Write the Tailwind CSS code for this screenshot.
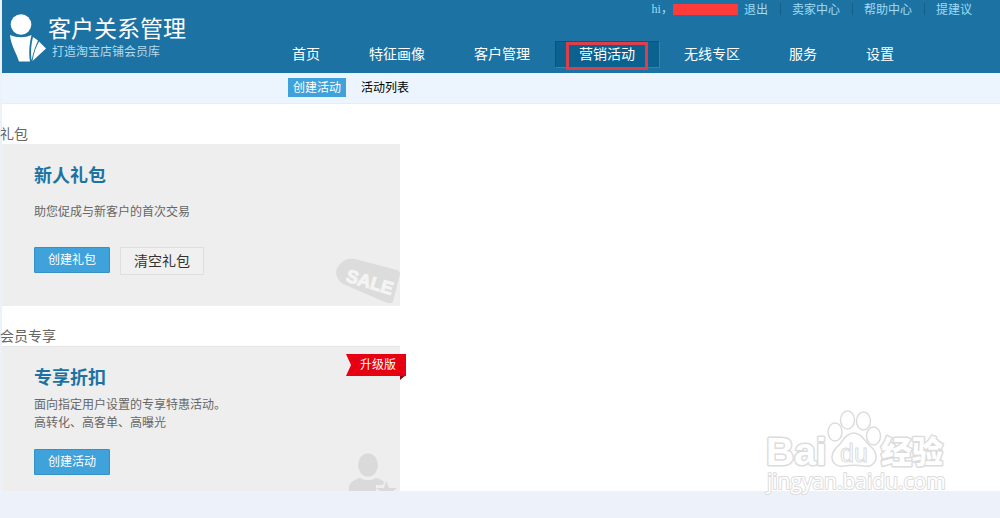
<!DOCTYPE html>
<html lang="zh-CN">
<head>
    <meta charset="UTF-8">
    <meta name="viewport" content="width=device-width, initial-scale=1.0">
    <title>客户关系管理</title>
    <script src="https://cdn.jsdelivr.net/npm/@tailwindcss/browser@4"></script>
</head>
<body class="relative min-h-screen overflow-x-hidden bg-[#ecf1fa] pl-[2px] font-['Noto_Sans_CJK_SC',sans-serif] text-xs text-[#666]">

    <!-- Header -->
    <header class="flex h-[73px] bg-[#1c73a3] text-white">
        <a href="#" class="flex w-[266px] shrink-0 gap-[2px] pt-[11px] pl-2">
            <svg class="mt-[3px] h-12 w-9 shrink-0" viewBox="0 0 36 48" fill="#fff" aria-hidden="true">
                <circle cx="11" cy="10.500" r="10.300"/>
                <path d="M0 21c7 3 15 3 21.500 0-2 9-3 17-1.500 26.500H9C7 40 1 32 0 21z"/>
                <path d="M23 23l5 3.500c-3 6-5 13-6.500 20-1-8-.5-16 1.500-23.500z"/>
                <path d="M29 27.500l7 7L22.500 47c1-7 3-13 6.500-19.500z"/>
            </svg>
            <span class="flex flex-col">
                <span class="text-[23px] leading-8">客户关系管理</span>
                <span class="pl-1 text-xs leading-4 text-[#b5d9ec]">打造淘宝店铺会员库</span>
            </span>
        </a>
        <div class="flex flex-1 flex-col">
            <div class="flex h-[41px] justify-end pr-7 leading-[18px] text-[#9fdcf5]">
                <span class="font-['Liberation_Serif','Noto_Sans_CJK_SC',serif]">hi，</span>
                <span class="mt-1 mr-[6px] h-[11px] w-[65px] bg-[#fd3b3b]"></span>
                <a href="#" class="pr-3">退出</a>
                <span class="mt-[3px] h-3 w-px bg-[#155f89]"></span>
                <a href="#" class="pr-3 pl-[11px]">卖家中心</a>
                <span class="mt-[3px] h-3 w-px bg-[#155f89]"></span>
                <a href="#" class="pr-3 pl-[11px]">帮助中心</a>
                <span class="mt-[3px] h-3 w-px bg-[#155f89]"></span>
                <a href="#" class="pl-[11px]">提建议</a>
            </div>
            <nav class="flex gap-px text-sm leading-6 whitespace-nowrap">
                <a href="#" class="px-6 pb-[2px]">首页</a>
                <a href="#" class="px-6 pb-[2px]">特征画像</a>
                <a href="#" class="px-6 pb-[2px]">客户管理</a>
                <a href="#" class="relative bg-[#0c628f] px-6 pb-[2px] shadow-[inset_1px_1px_0_#0a5480,1px_1px_0_#2f86b5]">
                    营销活动
                    <span class="absolute inset-x-[11px] top-px h-[28px] border-3 border-[#dc3f49]"></span>
                </a>
                <a href="#" class="px-6 pb-[2px]">无线专区</a>
                <a href="#" class="px-6 pb-[2px]">服务</a>
                <a href="#" class="px-6 pb-[2px]">设置</a>
            </nav>
        </div>
    </header>

    <!-- Sub navigation -->
    <nav class="flex h-[31px] gap-[10px] border-b border-[#e6edf7] bg-[#ecf4fd] pt-[5px] pl-[286px] leading-[17px]">
        <a href="#" class="h-[19px] bg-[#3fa2db] px-[5px] text-white">创建活动</a>
        <a href="#" class="h-[19px] px-[5px] text-black">活动列表</a>
    </nav>

    <main class="bg-white pt-5">
        <section>
            <h2 class="-ml-[2px] pb-[2px] text-sm leading-[18px]">礼包</h2>
            <div class="relative h-[162px] w-[398px] bg-[#eee] px-8 pt-[18px]">
                <h3 class="text-lg leading-6 font-bold text-[#1c73a3]">新人礼包</h3>
                <p class="mt-4 leading-[18px]">助您促成与新客户的首次交易</p>
                <div class="mt-[27px] flex items-start gap-[10px]">
                    <button type="button" class="h-[26px] w-[76px] rounded-[1px] border border-[#3590c4] bg-[#3fa2db] pb-[2px] text-white">创建礼包</button>
                    <button type="button" class="h-[28px] w-[84px] border border-[#dfdfdf] bg-[#f0f0f0] pb-[2px] text-sm text-[#333]">清空礼包</button>
                </div>
                <svg class="absolute right-0 bottom-0 h-[50px] w-[68px]" viewBox="0 0 68 50" aria-hidden="true">
                    <path d="M23 3c-5-1-9 0-13 3-4 4-6 7-6 10 0 4 3 10 7 12l43 18.500c4 1 6 1 7-1L68 18c0-2-1-3-3-4z" fill="#dcdcdc"/>
                    <text x="13" y="25" transform="rotate(17 13 25)" font-family="Liberation Sans" font-size="18" font-weight="bold" fill="#f4f4f4" stroke="#f4f4f4">SALE</text>
                </svg>
            </div>
        </section>

        <section class="pt-5">
            <h2 class="-ml-[2px] pb-[2px] text-sm leading-[18px]">会员专享</h2>
            <div class="relative h-[145px] w-[398px] border-t border-[#e4e4e4] bg-[#eee] px-8 pt-[17px]">
                <h3 class="text-lg leading-6 font-bold text-[#1c73a3]">专享折扣</h3>
                <p class="mt-[7px] leading-[18px]">面向指定用户设置的专享特惠活动。<br>高转化、高客单、高曝光</p>
                <button type="button" class="mt-[18px] h-[26px] w-[76px] rounded-[1px] border border-[#3590c4] bg-[#3fa2db] pb-[2px] text-white">创建活动</button>

                <!-- Ribbon -->
                <div class="absolute top-[7px] -right-[6px] h-[26px] w-[60px]">
                    <svg class="absolute inset-0" viewBox="0 0 60 26" aria-hidden="true">
                        <path d="M54 21h6l-6 5z" fill="#8d0a10"/>
                        <path d="M0 0h60v22H0l5-11z" fill="#e60012"/>
                    </svg>
                    <span class="relative block pl-[14px] leading-5 text-white">升级版</span>
                </div>

                <svg class="absolute right-0 bottom-0 h-[38px] w-[52px]" viewBox="0 0 52 38" fill="#dadada" aria-hidden="true">
                    <ellipse cx="20" cy="12" rx="10" ry="11.500"/>
                    <path d="M1 38c-1-7 3-11 11-13 5 3 11 3 16 0 4 1 7 2 8 4l-1 3h-7v6z"/>
                    <path d="M28 35h8l2-7 3 7h8l-4 3H32z"/>
                </svg>
            </div>
        </section>
    </main>

    <!-- Watermark -->
    <svg class="pointer-events-none absolute top-[405px] right-[50px] h-[95px] w-[190px]" viewBox="0 0 190 95" fill="#fff" stroke="#dcdcdc" aria-hidden="true">
        <g paint-order="stroke" stroke-width="3" stroke-linejoin="round" font-family="Liberation Sans" font-weight="bold">
            <text x="6" y="60" font-size="39">Bai</text>
            <text x="121" y="58" font-size="31" font-family="Noto Sans CJK SC" font-weight="900">经验</text>
            <text x="7" y="84" font-size="21" stroke-width="2" font-family="Open Sans" font-weight="400">jingyan.baidu.com</text>
        </g>
        <g stroke-width="1.500">
            <ellipse cx="75" cy="27" rx="7" ry="9"/>
            <ellipse cx="87.500" cy="15" rx="7" ry="9"/>
            <ellipse cx="103.500" cy="16" rx="7" ry="9"/>
            <ellipse cx="113.500" cy="31" rx="7" ry="9"/>
            <path d="M94 28c7 0 10 7 15 12 5 4 8 8 7 14-2 7-8 8-12 7-7-1-13-1-20 0-6 1-12-2-12-9 0-6 4-9 8-13 4-5 7-11 14-11z"/>
        </g>
        <text x="80" y="57" font-size="25" font-family="Liberation Sans">du</text>
    </svg>

</body>
</html>
